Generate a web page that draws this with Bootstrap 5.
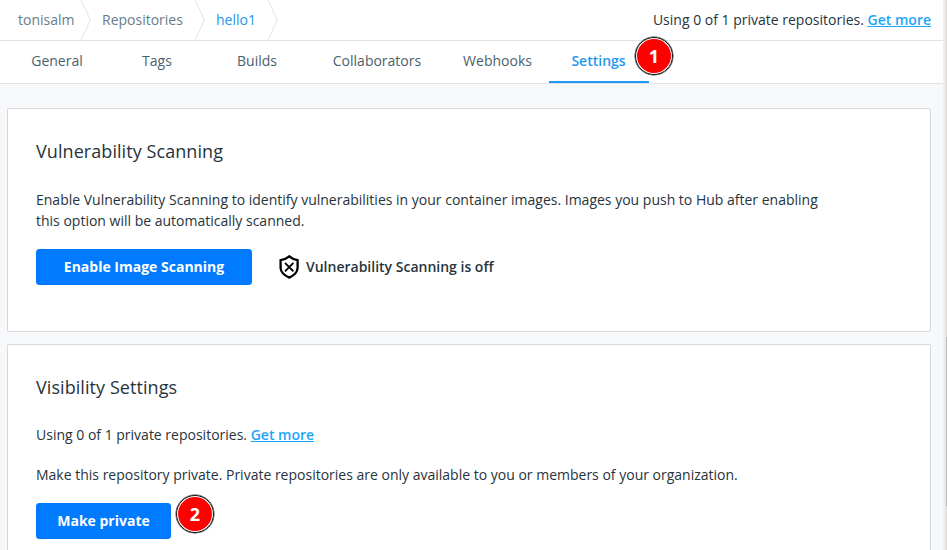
<!DOCTYPE html>
<html lang="en">
<head>
<meta charset="utf-8">
<title>hello1 - Repository settings</title>
<link rel="stylesheet" href="https://cdn.jsdelivr.net/npm/bootstrap@5.3.0/dist/css/bootstrap.min.css">
<style>
body{font:14px/21px "Open Sans",sans-serif;color:#27343b;background:#f7f8fa;height:550px;overflow:hidden}
.page{width:943px;flex:none}
.crumbs{height:41px;border-bottom:1px solid #e1e2e6;padding-right:12px}
.crumbs .crumb,.crumbs .usage{height:21px;margin-bottom:2px}
.crumbs .crumb{flex:none;color:#677d8b;text-decoration:none;white-space:nowrap}
.crumbs .crumb.current{color:#2496ed}
.crumbs svg{display:block;flex:none}
.crumb-user{width:79px;padding-left:18px}
.crumb-repos{width:100px;padding-left:9px}
.crumb-name{width:59px;padding-left:9px}
.more{color:#1ba6f6;font-weight:600;text-decoration:underline}
.tabs{height:43px;border-bottom:1px solid #e1e2e6}
.tabs .nav-link{padding:0;height:42px;line-height:40px;text-align:center;color:#4b5f6d;border-bottom:2px solid transparent}
.tabs .nav-link.active{color:#2496ed;border-color:#2496ed;font-weight:600;padding-right:1px}
.tab-general,.tab-builds{width:114px}
.tab-tags{width:86px}
.tab-collab{width:126px}
.tab-hooks{width:109px;padding-left:6px!important}
.tab-settings{width:100px}
.panel{width:924px;margin-left:7px;padding:29px 28px 0;border:1px solid #d5d9de;border-radius:2px;background:#fff}
.panel h2{font-size:18px;line-height:26px;margin:0;font-weight:400;letter-spacing:.07px}
.panel .btn{--bs-btn-bg:#007bff;--bs-btn-border-color:#007bff;height:36px;padding:0;font-size:14px;font-weight:700;line-height:34px;border-radius:3px}
.panel p{margin:0}
.actions{margin-top:18px}
.scan-panel{height:224px;margin-top:24px}
.scan-panel p{margin-top:25px}
.btn-scan{width:216px}
.shield{margin-left:27px}
.scan-state{margin:0 0 2px 7px}
.visibility-panel{height:206px;margin-top:12px;border-bottom:0;border-radius:2px 2px 0 0}
.visibility-panel p{margin-top:24px}
.visibility-panel p + p{margin-top:19px}
.btn-private{width:135px}
.step{width:38px;height:38px;border:1px solid #111;padding:1px;border-radius:50%;box-shadow:0 0 0 .5px #333}
.step span{width:100%;height:100%;border-radius:50%;background:#f00;color:#fff;font-weight:700;font-size:18px}
.step-one{position:absolute;left:635px;top:37px}
.step-two{margin:-8px 0 0 5px}
.track{flex:none;width:4px;background:linear-gradient(90deg,#f1f0ef,#e9e7e5);border-right:1px solid #dad8d6}
.thumb{width:1px;height:169px;margin-left:3px;margin-top:337px;background:#b8b8b8}
</style>
<script src="https://cdn.jsdelivr.net/npm/bootstrap@5.3.0/dist/js/bootstrap.bundle.min.js"></script>
</head>
<body class="d-flex">
<main class="page position-relative">
  <header class="crumbs d-flex align-items-center bg-white">
    <a class="crumb crumb-user" href="#">tonisalm</a>
    <svg width="14" height="40" viewBox="0 0 14 40" fill="none" stroke="#e1e2e6"><path d="M2 0 11.3 20 2 40"/></svg>
    <a class="crumb crumb-repos" href="#">Repositories</a>
    <svg width="14" height="40" viewBox="0 0 14 40" fill="none" stroke="#e1e2e6"><path d="M2 0 11.3 20 2 40"/></svg>
    <a class="crumb crumb-name current" href="#">hello1</a>
    <svg width="14" height="40" viewBox="0 0 14 40" fill="none" stroke="#e1e2e6"><path d="M2 0 11.3 20 2 40"/></svg>
    <span class="usage ms-auto">Using 0 of 1 private repositories. <a class="more" href="#">Get more</a></span>
  </header>
  <nav class="tabs nav flex-nowrap bg-white">
    <a class="nav-link tab-general" href="#">General</a>
    <a class="nav-link tab-tags" href="#">Tags</a>
    <a class="nav-link tab-builds" href="#">Builds</a>
    <a class="nav-link tab-collab" href="#">Collaborators</a>
    <a class="nav-link tab-hooks" href="#">Webhooks</a>
    <a class="nav-link tab-settings active" href="#">Settings</a>
  </nav>
  <div class="step step-one"><span class="d-flex align-items-center justify-content-center">1</span></div>
  <section class="panel scan-panel">
    <h2>Vulnerability Scanning</h2>
    <p>Enable Vulnerability Scanning to identify vulnerabilities in your container images. Images you push to Hub after enabling<br>this option will be automatically scanned.</p>
    <div class="actions d-flex align-items-center">
      <button class="btn btn-primary btn-scan">Enable Image Scanning</button>
      <svg class="shield" width="20" height="24" viewBox="0 0 20 24" fill="none" stroke="#000"><path stroke-width="2.3" d="M10.3 1.4Q7 4.2 1.6 5.2V13Q2 19 10.3 22.6Q18.2 19 18.6 13V5.2Q13.3 4.2 10.3 1.4Z"/><path stroke-width="1.9" d="m6 7.9 8.4 8.4m0-8.4L6 16.3"/></svg>
      <span class="scan-state fw-semibold">Vulnerability Scanning is off</span>
    </div>
  </section>
  <section class="panel visibility-panel">
    <h2>Visibility Settings</h2>
    <p>Using 0 of 1 private repositories. <a class="more" href="#">Get more</a></p>
    <p>Make this repository private. Private repositories are only available to you or members of your organization.</p>
    <div class="actions d-flex align-items-start">
      <button class="btn btn-primary btn-private">Make private</button>
      <div class="step step-two"><span class="d-flex align-items-center justify-content-center">2</span></div>
    </div>
  </section>
</main>
<div class="track"><div class="thumb"></div></div>
</body>
</html>
